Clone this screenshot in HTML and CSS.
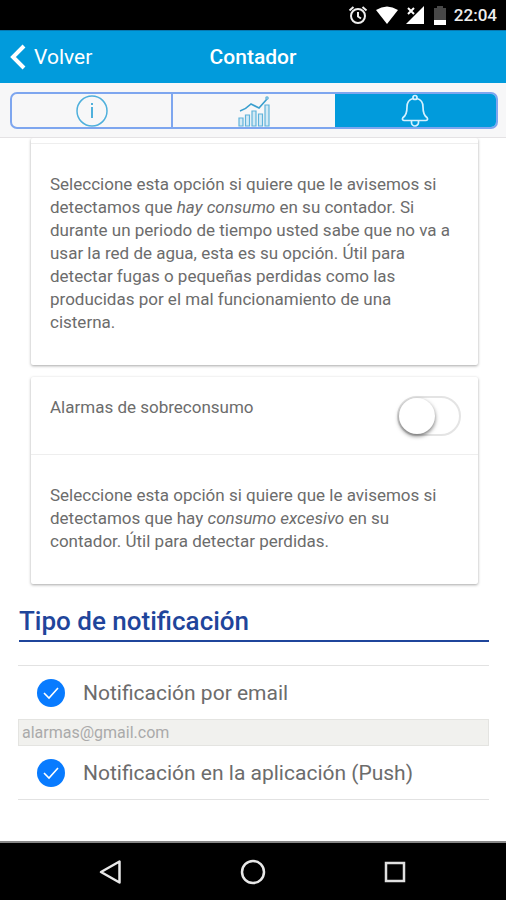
FILE: index.html
```html
<!DOCTYPE html>
<html lang="es">
<head>
<meta charset="utf-8">
<meta name="viewport" content="width=device-width, initial-scale=1">
<title>Contador</title>
<link rel="stylesheet" href="styles.css">
</head>
<body>
<div class="status">
  <svg width="20" height="20" viewBox="0 0 20 20" fill="none" stroke="#eee" stroke-width="2"><circle cx="10" cy="11" r="7"/><path d="M10 7v4.500l3 2M1.500 5.500l4-3.500M18.500 5.500l-4-3.500"/></svg>
  <svg width="22" height="18" viewBox="0 0 22 18" fill="#fff"><path d="M0 4Q11-3 22 4L11 18Z"/></svg>
  <svg width="18" height="18" viewBox="0 0 18 18"><path d="M18 0v18H0Z" fill="#fff"/><path d="M0 0h9v9H0Z" fill="#000"/><path d="M2 2l6 6M8 2L2 8" stroke="#fff" stroke-width="2"/></svg>
  <svg class="battery" width="12" height="19" viewBox="0 0 12 19"><path d="M3 0h6v2h3v12H0V2h3Z" fill="#484848"/><path d="M0 14h12v5H0Z" fill="#fff"/></svg>
  <span class="clock">22:04</span>
</div>
<header class="bar">
  <a class="back" href="#"><svg width="16" height="26" viewBox="0 0 16 26" fill="none" stroke="#fff" stroke-width="4"><path d="M14 2L3 13l11 11"/></svg>Volver</a>
  <h1 class="title">Contador</h1>
</header>
<nav class="tabs">
  <div class="segments">
    <button class="segment" aria-label="Información"><svg width="32" height="32" viewBox="0 0 32 32" fill="none" stroke="#4fb0dc" stroke-width="1.500"><circle cx="16" cy="16" r="15"/><path d="M16 12v11M16 8v2" stroke-width="2"/></svg></button>
    <button class="segment" aria-label="Consumo"><svg width="34" height="32" viewBox="0 0 34 32" fill="#d3eaf5" stroke="#5fb2da" stroke-width="1.200"><path d="M2 23h4v8H2ZM8.500 20h4v11h-4ZM15 16h4v15h-4ZM21.500 19h4v12h-4ZM28 10h4v21h-4Z"/><path d="M3 16Q9 14 14 9l8 4 8-9" fill="none" stroke="#3a9fce" stroke-width="1.700"/><circle cx="30" cy="3" r="1.200"/></svg></button>
    <button class="segment active" aria-label="Alarmas"><svg width="30" height="34" viewBox="0 0 30 34" fill="none" stroke="#d5f1ff" stroke-width="1.700" stroke-linejoin="round"><path d="M13 4.500Q7 6 7 13c0 7-1.500 9-4 10.500Q1.500 26 4 26.500h22q2.500-.5 1-3c-2.500-1.500-4-3.500-4-10.500q0-7-6-8.500M11.500 26.500v2a3.500 3.500 0 0 0 7 0v-2"/><circle cx="15" cy="3.500" r="2"/></svg></button>
  </div>
</nav>
<main class="content">
  <section class="card">
    <p class="text">Seleccione esta opción si quiere que le avisemos si detectamos que <em>hay consumo</em> en su contador. Si durante un periodo de tiempo usted sabe que no va a usar la red de agua, esta es su opción. Útil para detectar fugas o pequeñas perdidas como las producidas por el mal funcionamiento de una cisterna.</p>
  </section>
  <section class="card">
    <div class="card-head">
      <label for="excess">Alarmas de sobreconsumo</label>
      <input class="toggle" id="excess" type="checkbox" role="switch">
    </div>
    <p class="text">Seleccione esta opción si quiere que le avisemos si detectamos que hay <em>consumo excesivo</em> en su contador. Útil para detectar perdidas.</p>
  </section>
  <h2 class="heading">Tipo de notificación</h2>
  <div class="options">
    <div class="option">
      <span class="tick"><input id="by-email" type="checkbox" checked><svg viewBox="0 0 28 28" fill="none" stroke="#fff" stroke-width="1.600"><path d="M7 14l5 5 9-10"/></svg></span>
      <label for="by-email">Notificación por email</label>
    </div>
    <input class="email" type="email" aria-label="Correo electrónico" value="alarmas@gmail.com">
    <div class="option">
      <span class="tick"><input id="by-push" type="checkbox" checked><svg viewBox="0 0 28 28" fill="none" stroke="#fff" stroke-width="1.600"><path d="M7 14l5 5 9-10"/></svg></span>
      <label for="by-push">Notificación en la aplicación (Push)</label>
    </div>
  </div>
</main>
<footer class="system">
  <button aria-label="Atrás"><svg width="26" height="26" viewBox="0 0 26 26" fill="none" stroke="#e8e8e8" stroke-width="2.500" stroke-linejoin="round"><path d="M21.500 2.500v21L3 13Z"/></svg></button>
  <button aria-label="Inicio"><svg width="26" height="26" viewBox="0 0 26 26" fill="none" stroke="#e8e8e8" stroke-width="2.500"><circle cx="13" cy="13" r="11"/></svg></button>
  <button aria-label="Recientes"><svg width="26" height="26" viewBox="0 0 26 26" fill="none" stroke="#e0e0e0" stroke-width="2.500"><path d="M4 4h18v18H4Z"/></svg></button>
</footer>
</body>
</html>
```
FILE: styles.css
```css
* {
  box-sizing: border-box;
}

body {
  margin: 0;
  min-height: 100vh;
  display: flex;
  flex-direction: column;
  background: #fff;
  color: #6c6c6c;
  font-family: Roboto, "Liberation Sans", sans-serif;
  font-size: 17px;
}

button {
  padding: 0;
  border: 0;
  background: none;
}

svg {
  display: block;
}

.status {
  display: flex;
  align-items: center;
  justify-content: flex-end;
  gap: 8px;
  height: 30px;
  padding: 0 9px;
  background: #000;
  color: #eee;
}

.battery {
  margin-left: 2px;
}

.clock {
  font-size: 17px;
  font-weight: 500;
}

.bar {
  display: grid;
  grid-template-columns: 1fr auto 1fr;
  align-items: center;
  height: 53px;
  padding: 0 10px;
  border-top: 1px solid #0878b0;
  background: #019bdc;
  color: #fff;
}

.back {
  display: flex;
  align-items: center;
  gap: 8px;
  color: inherit;
  font-size: 21px;
  text-decoration: none;
}

.title {
  margin: 0;
  font-size: 21px;
  font-weight: 500;
}

.tabs {
  padding: 9px 8px 8px 10px;
  border-bottom: 1px solid #e4e2e4;
  background: #f7f7f8;
}

.segments {
  display: grid;
  grid-template-columns: repeat(3, 1fr);
  height: 37px;
  overflow: hidden;
  border: 2px solid #7ea6ef;
  border-radius: 7px;
}

.segment {
  display: flex;
  align-items: center;
  justify-content: center;
}

.segment:first-child {
  border-right: 2px solid #7ea6ef;
}

.segment.active {
  background: #019bdc;
}

.content {
  flex: 1;
}

.card {
  margin: 0 28px 12px 31px;
  border-radius: 2px;
  box-shadow: 0 1px 3px rgba(0, 0, 0, 0.35);
}

.card:first-child {
  padding-top: 5px;
  clip-path: inset(0 -4px -4px);
}

.card-head {
  display: flex;
  justify-content: space-between;
  height: 77px;
  padding: 19px 17px 18px 19px;
}

.card-head label {
  line-height: 23px;
}

.toggle {
  appearance: none;
  width: 64px;
  height: 40px;
  margin: 0;
  border: 2px solid #e4e4e4;
  border-radius: 20px;
}

.toggle::before {
  content: "";
  display: block;
  width: 36px;
  height: 36px;
  border-radius: 50%;
  background: #fff;
  box-shadow: 0 2px 4px rgba(0, 0, 0, 0.55);
}

.toggle:checked::before {
  margin-left: 24px;
}

.text {
  margin: 0;
  padding: 29px 19px 31px;
  border-top: 1px solid #eee;
  line-height: 23px;
}

.heading {
  margin: 20px 17px 23px 19px;
  padding-bottom: 2px;
  border-bottom: 2px solid #1f459b;
  color: #1f459b;
  font-size: 26px;
  font-weight: 500;
  line-height: 34px;
}

.options {
  margin: 0 17px 0 18px;
  border: solid #e2e2e2;
  border-width: 1px 0;
}

.option {
  display: flex;
  align-items: center;
  gap: 18px;
  height: 53px;
  padding-left: 19px;
  font-size: 21px;
}

.tick {
  display: grid;
}

.tick > * {
  grid-area: 1 / 1;
  width: 28px;
  height: 28px;
  pointer-events: none;
}

.tick input {
  appearance: none;
  margin: 0;
  border-radius: 50%;
  background: #087bff;
  pointer-events: auto;
}

.email {
  display: block;
  width: 100%;
  height: 27px;
  padding: 0 3px;
  border: 1px solid #e4e4e1;
  background: #f1f1ee;
  color: #aaa;
  font: inherit;
  font-size: 16px;
}

.system {
  display: grid;
  grid-template-columns: repeat(3, 142px);
  justify-content: center;
  height: 59px;
  border-top: 2px solid #888;
  background: #000;
}

.system button {
  display: grid;
  place-items: center;
}
```
